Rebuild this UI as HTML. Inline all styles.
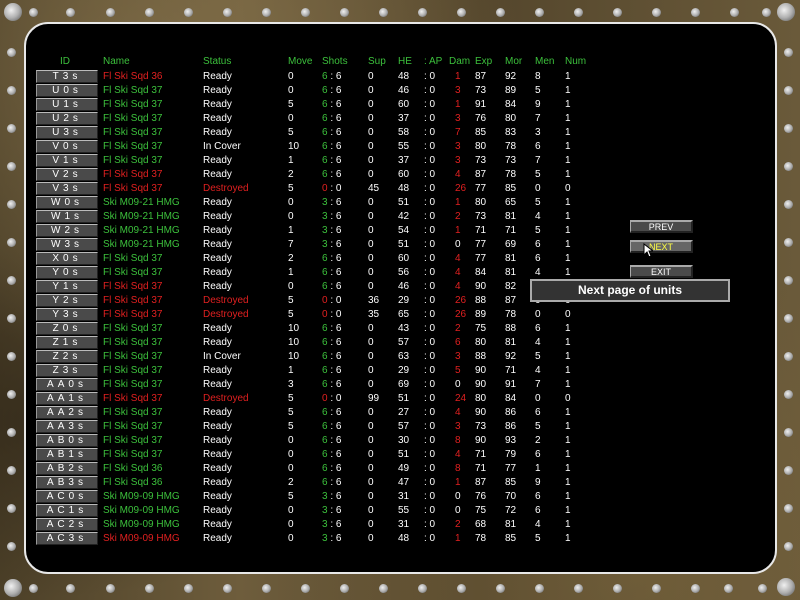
<!DOCTYPE html>
<html><head><meta charset="utf-8"><style>
*{margin:0;padding:0;box-sizing:border-box}
body{width:800px;height:600px;overflow:hidden;position:relative;font-family:"Liberation Sans",sans-serif;font-size:10px;
background:#5e4f33;}
.frame{position:absolute;inset:0;background:
radial-gradient(ellipse at 20% 10%,rgba(140,120,80,.6),transparent 40%),
radial-gradient(ellipse at 80% 95%,rgba(120,100,60,.6),transparent 40%),
radial-gradient(ellipse at 5% 70%,rgba(40,32,20,.6),transparent 30%),
linear-gradient(90deg,#4c4028,#6e5d3c 30%,#54462c 60%,#6a5a3a);}
.panel{position:absolute;left:24px;top:22px;width:753px;height:552px;background:#000;border:2px solid #e8e8e8;border-radius:24px}
.rv{position:absolute;width:9px;height:9px;border-radius:50%;background:radial-gradient(circle at 40% 40%,#f0f0f0,#b0b0b0 50%,#505050 100%)}
.big{width:18px;height:18px}
.r{position:absolute;left:0;height:14px;line-height:14px;color:#fff;white-space:nowrap}
.r>*{position:absolute;top:0;font-style:normal;font-weight:normal}
.r>b{left:36px;width:62px;height:13px;top:0;background:#4a4a4a;border-top:1px solid #bbb;border-left:1px solid #999;border-bottom:1px solid #222;border-right:1px solid #222;text-align:center;line-height:12px;letter-spacing:4px;color:#fff}
.r>:nth-child(2){left:103px}.r>:nth-child(3){left:203px}.r>:nth-child(4){left:288px}
.r>:nth-child(5){left:322px}.r>:nth-child(6){left:368px}.r>:nth-child(7){left:398px}
.r>:nth-child(8){left:424px}.r>:nth-child(9){left:455px}.r>:nth-child(10){left:475px}
.r>:nth-child(11){left:505px}.r>:nth-child(12){left:535px}.r>:nth-child(13){left:565px}
.g{color:#3cc03c}.d{color:#e02020}
.h{color:#3cc03c}.h>:first-child{left:60px}.h>:nth-child(9){left:449px}
.btn{position:absolute;left:630px;width:63px;height:13px;background:#4a4a4a;border-top:2px solid #aaa;border-left:1px solid #aaa;border-right:2px solid #222;border-bottom:2px solid #222;color:#fff;text-align:center;font-size:9px;line-height:10px}
.tip{position:absolute;left:530px;top:279px;width:200px;height:23px;background:#333;border:2px solid #aaa;color:#fff;text-align:center;font-size:12px;font-weight:bold;line-height:19px}
</style></head><body>
<div class="frame"></div>
<div class="rv big" style="left:4px;top:3px"></div><div class="rv big" style="left:777px;top:3px"></div>
<div class="rv big" style="left:4px;top:579px"></div><div class="rv big" style="left:777px;top:578px"></div>
<div class="rv" style="left:29px;top:8px"></div><div class="rv" style="left:66px;top:8px"></div><div class="rv" style="left:106px;top:8px"></div><div class="rv" style="left:145px;top:8px"></div><div class="rv" style="left:184px;top:8px"></div><div class="rv" style="left:223px;top:8px"></div><div class="rv" style="left:262px;top:8px"></div><div class="rv" style="left:301px;top:8px"></div><div class="rv" style="left:340px;top:8px"></div><div class="rv" style="left:379px;top:8px"></div><div class="rv" style="left:418px;top:8px"></div><div class="rv" style="left:457px;top:8px"></div><div class="rv" style="left:496px;top:8px"></div><div class="rv" style="left:535px;top:8px"></div><div class="rv" style="left:574px;top:8px"></div><div class="rv" style="left:613px;top:8px"></div><div class="rv" style="left:652px;top:8px"></div><div class="rv" style="left:691px;top:8px"></div><div class="rv" style="left:730px;top:8px"></div><div class="rv" style="left:762px;top:8px"></div>
<div class="rv" style="left:29px;top:584px"></div><div class="rv" style="left:66px;top:584px"></div><div class="rv" style="left:106px;top:584px"></div><div class="rv" style="left:145px;top:584px"></div><div class="rv" style="left:184px;top:584px"></div><div class="rv" style="left:223px;top:584px"></div><div class="rv" style="left:262px;top:584px"></div><div class="rv" style="left:301px;top:584px"></div><div class="rv" style="left:340px;top:584px"></div><div class="rv" style="left:379px;top:584px"></div><div class="rv" style="left:418px;top:584px"></div><div class="rv" style="left:457px;top:584px"></div><div class="rv" style="left:496px;top:584px"></div><div class="rv" style="left:535px;top:584px"></div><div class="rv" style="left:574px;top:584px"></div><div class="rv" style="left:613px;top:584px"></div><div class="rv" style="left:652px;top:584px"></div><div class="rv" style="left:691px;top:584px"></div><div class="rv" style="left:724px;top:584px"></div><div class="rv" style="left:758px;top:584px"></div>
<div class="rv" style="left:7px;top:48px"></div><div class="rv" style="left:7px;top:86px"></div><div class="rv" style="left:7px;top:124px"></div><div class="rv" style="left:7px;top:162px"></div><div class="rv" style="left:7px;top:200px"></div><div class="rv" style="left:7px;top:238px"></div><div class="rv" style="left:7px;top:276px"></div><div class="rv" style="left:7px;top:314px"></div><div class="rv" style="left:7px;top:352px"></div><div class="rv" style="left:7px;top:390px"></div><div class="rv" style="left:7px;top:428px"></div><div class="rv" style="left:7px;top:466px"></div><div class="rv" style="left:7px;top:504px"></div><div class="rv" style="left:7px;top:542px"></div>
<div class="rv" style="left:784px;top:48px"></div><div class="rv" style="left:784px;top:86px"></div><div class="rv" style="left:784px;top:124px"></div><div class="rv" style="left:784px;top:162px"></div><div class="rv" style="left:784px;top:200px"></div><div class="rv" style="left:784px;top:238px"></div><div class="rv" style="left:784px;top:276px"></div><div class="rv" style="left:784px;top:314px"></div><div class="rv" style="left:784px;top:352px"></div><div class="rv" style="left:784px;top:390px"></div><div class="rv" style="left:784px;top:428px"></div><div class="rv" style="left:784px;top:466px"></div><div class="rv" style="left:784px;top:504px"></div><div class="rv" style="left:784px;top:542px"></div>
<div class="panel"></div>

<div class="r h" style="top:55px"><i>ID</i><i>Name</i><i>Status</i><i>Move</i><i>Shots</i><i>Sup</i><i>HE</i><i>: AP</i><i>Dam</i><i>Exp</i><i>Mor</i><i>Men</i><i>Num</i></div>

<div class="r" style="top:70px"><b>T3s</b><i class="d">Fl Ski Sqd 36</i><i>Ready</i><i>0</i><i><span class="g">6</span> : 6</i><i>0</i><i>48</i><i>: 0</i><i class="d">1</i><i>87</i><i>92</i><i>8</i><i>1</i></div>
<div class="r" style="top:84px"><b>U0s</b><i class="g">Fl Ski Sqd 37</i><i>Ready</i><i>0</i><i><span class="g">6</span> : 6</i><i>0</i><i>46</i><i>: 0</i><i class="d">3</i><i>73</i><i>89</i><i>5</i><i>1</i></div>
<div class="r" style="top:98px"><b>U1s</b><i class="g">Fl Ski Sqd 37</i><i>Ready</i><i>5</i><i><span class="g">6</span> : 6</i><i>0</i><i>60</i><i>: 0</i><i class="d">1</i><i>91</i><i>84</i><i>9</i><i>1</i></div>
<div class="r" style="top:112px"><b>U2s</b><i class="g">Fl Ski Sqd 37</i><i>Ready</i><i>0</i><i><span class="g">6</span> : 6</i><i>0</i><i>37</i><i>: 0</i><i class="d">3</i><i>76</i><i>80</i><i>7</i><i>1</i></div>
<div class="r" style="top:126px"><b>U3s</b><i class="g">Fl Ski Sqd 37</i><i>Ready</i><i>5</i><i><span class="g">6</span> : 6</i><i>0</i><i>58</i><i>: 0</i><i class="d">7</i><i>85</i><i>83</i><i>3</i><i>1</i></div>
<div class="r" style="top:140px"><b>V0s</b><i class="g">Fl Ski Sqd 37</i><i>In Cover</i><i>10</i><i><span class="g">6</span> : 6</i><i>0</i><i>55</i><i>: 0</i><i class="d">3</i><i>80</i><i>78</i><i>6</i><i>1</i></div>
<div class="r" style="top:154px"><b>V1s</b><i class="g">Fl Ski Sqd 37</i><i>Ready</i><i>1</i><i><span class="g">6</span> : 6</i><i>0</i><i>37</i><i>: 0</i><i class="d">3</i><i>73</i><i>73</i><i>7</i><i>1</i></div>
<div class="r" style="top:168px"><b>V2s</b><i class="d">Fl Ski Sqd 37</i><i>Ready</i><i>2</i><i><span class="g">6</span> : 6</i><i>0</i><i>60</i><i>: 0</i><i class="d">4</i><i>87</i><i>78</i><i>5</i><i>1</i></div>
<div class="r" style="top:182px"><b>V3s</b><i class="d">Fl Ski Sqd 37</i><i class="d">Destroyed</i><i>5</i><i><span class="d">0</span> : 0</i><i>45</i><i>48</i><i>: 0</i><i class="d">26</i><i>77</i><i>85</i><i>0</i><i>0</i></div>
<div class="r" style="top:196px"><b>W0s</b><i class="g">Ski M09-21 HMG</i><i>Ready</i><i>0</i><i><span class="g">3</span> : 6</i><i>0</i><i>51</i><i>: 0</i><i class="d">1</i><i>80</i><i>65</i><i>5</i><i>1</i></div>
<div class="r" style="top:210px"><b>W1s</b><i class="g">Ski M09-21 HMG</i><i>Ready</i><i>0</i><i><span class="g">3</span> : 6</i><i>0</i><i>42</i><i>: 0</i><i class="d">2</i><i>73</i><i>81</i><i>4</i><i>1</i></div>
<div class="r" style="top:224px"><b>W2s</b><i class="g">Ski M09-21 HMG</i><i>Ready</i><i>1</i><i><span class="g">3</span> : 6</i><i>0</i><i>54</i><i>: 0</i><i class="d">1</i><i>71</i><i>71</i><i>5</i><i>1</i></div>
<div class="r" style="top:238px"><b>W3s</b><i class="g">Ski M09-21 HMG</i><i>Ready</i><i>7</i><i><span class="g">3</span> : 6</i><i>0</i><i>51</i><i>: 0</i><i>0</i><i>77</i><i>69</i><i>6</i><i>1</i></div>
<div class="r" style="top:252px"><b>X0s</b><i class="g">Fl Ski Sqd 37</i><i>Ready</i><i>2</i><i><span class="g">6</span> : 6</i><i>0</i><i>60</i><i>: 0</i><i class="d">4</i><i>77</i><i>81</i><i>6</i><i>1</i></div>
<div class="r" style="top:266px"><b>Y0s</b><i class="g">Fl Ski Sqd 37</i><i>Ready</i><i>1</i><i><span class="g">6</span> : 6</i><i>0</i><i>56</i><i>: 0</i><i class="d">4</i><i>84</i><i>81</i><i>4</i><i>1</i></div>
<div class="r" style="top:280px"><b>Y1s</b><i class="d">Fl Ski Sqd 37</i><i>Ready</i><i>0</i><i><span class="g">6</span> : 6</i><i>0</i><i>46</i><i>: 0</i><i class="d">4</i><i>90</i><i>82</i><i>6</i><i>1</i></div>
<div class="r" style="top:294px"><b>Y2s</b><i class="d">Fl Ski Sqd 37</i><i class="d">Destroyed</i><i>5</i><i><span class="d">0</span> : 0</i><i>36</i><i>29</i><i>: 0</i><i class="d">26</i><i>88</i><i>87</i><i>0</i><i>0</i></div>
<div class="r" style="top:308px"><b>Y3s</b><i class="d">Fl Ski Sqd 37</i><i class="d">Destroyed</i><i>5</i><i><span class="d">0</span> : 0</i><i>35</i><i>65</i><i>: 0</i><i class="d">26</i><i>89</i><i>78</i><i>0</i><i>0</i></div>
<div class="r" style="top:322px"><b>Z0s</b><i class="g">Fl Ski Sqd 37</i><i>Ready</i><i>10</i><i><span class="g">6</span> : 6</i><i>0</i><i>43</i><i>: 0</i><i class="d">2</i><i>75</i><i>88</i><i>6</i><i>1</i></div>
<div class="r" style="top:336px"><b>Z1s</b><i class="g">Fl Ski Sqd 37</i><i>Ready</i><i>10</i><i><span class="g">6</span> : 6</i><i>0</i><i>57</i><i>: 0</i><i class="d">6</i><i>80</i><i>81</i><i>4</i><i>1</i></div>
<div class="r" style="top:350px"><b>Z2s</b><i class="g">Fl Ski Sqd 37</i><i>In Cover</i><i>10</i><i><span class="g">6</span> : 6</i><i>0</i><i>63</i><i>: 0</i><i class="d">3</i><i>88</i><i>92</i><i>5</i><i>1</i></div>
<div class="r" style="top:364px"><b>Z3s</b><i class="g">Fl Ski Sqd 37</i><i>Ready</i><i>1</i><i><span class="g">6</span> : 6</i><i>0</i><i>29</i><i>: 0</i><i class="d">5</i><i>90</i><i>71</i><i>4</i><i>1</i></div>
<div class="r" style="top:378px"><b>AA0s</b><i class="g">Fl Ski Sqd 37</i><i>Ready</i><i>3</i><i><span class="g">6</span> : 6</i><i>0</i><i>69</i><i>: 0</i><i>0</i><i>90</i><i>91</i><i>7</i><i>1</i></div>
<div class="r" style="top:392px"><b>AA1s</b><i class="d">Fl Ski Sqd 37</i><i class="d">Destroyed</i><i>5</i><i><span class="d">0</span> : 0</i><i>99</i><i>51</i><i>: 0</i><i class="d">24</i><i>80</i><i>84</i><i>0</i><i>0</i></div>
<div class="r" style="top:406px"><b>AA2s</b><i class="g">Fl Ski Sqd 37</i><i>Ready</i><i>5</i><i><span class="g">6</span> : 6</i><i>0</i><i>27</i><i>: 0</i><i class="d">4</i><i>90</i><i>86</i><i>6</i><i>1</i></div>
<div class="r" style="top:420px"><b>AA3s</b><i class="g">Fl Ski Sqd 37</i><i>Ready</i><i>5</i><i><span class="g">6</span> : 6</i><i>0</i><i>57</i><i>: 0</i><i class="d">3</i><i>73</i><i>86</i><i>5</i><i>1</i></div>
<div class="r" style="top:434px"><b>AB0s</b><i class="g">Fl Ski Sqd 37</i><i>Ready</i><i>0</i><i><span class="g">6</span> : 6</i><i>0</i><i>30</i><i>: 0</i><i class="d">8</i><i>90</i><i>93</i><i>2</i><i>1</i></div>
<div class="r" style="top:448px"><b>AB1s</b><i class="g">Fl Ski Sqd 37</i><i>Ready</i><i>0</i><i><span class="g">6</span> : 6</i><i>0</i><i>51</i><i>: 0</i><i class="d">4</i><i>71</i><i>79</i><i>6</i><i>1</i></div>
<div class="r" style="top:462px"><b>AB2s</b><i class="g">Fl Ski Sqd 36</i><i>Ready</i><i>0</i><i><span class="g">6</span> : 6</i><i>0</i><i>49</i><i>: 0</i><i class="d">8</i><i>71</i><i>77</i><i>1</i><i>1</i></div>
<div class="r" style="top:476px"><b>AB3s</b><i class="g">Fl Ski Sqd 36</i><i>Ready</i><i>2</i><i><span class="g">6</span> : 6</i><i>0</i><i>47</i><i>: 0</i><i class="d">1</i><i>87</i><i>85</i><i>9</i><i>1</i></div>
<div class="r" style="top:490px"><b>AC0s</b><i class="g">Ski M09-09 HMG</i><i>Ready</i><i>5</i><i><span class="g">3</span> : 6</i><i>0</i><i>31</i><i>: 0</i><i>0</i><i>76</i><i>70</i><i>6</i><i>1</i></div>
<div class="r" style="top:504px"><b>AC1s</b><i class="g">Ski M09-09 HMG</i><i>Ready</i><i>0</i><i><span class="g">3</span> : 6</i><i>0</i><i>55</i><i>: 0</i><i>0</i><i>75</i><i>72</i><i>6</i><i>1</i></div>
<div class="r" style="top:518px"><b>AC2s</b><i class="g">Ski M09-09 HMG</i><i>Ready</i><i>0</i><i><span class="g">3</span> : 6</i><i>0</i><i>31</i><i>: 0</i><i class="d">2</i><i>68</i><i>81</i><i>4</i><i>1</i></div>
<div class="r" style="top:532px"><b>AC3s</b><i class="d">Ski M09-09 HMG</i><i>Ready</i><i>0</i><i><span class="g">3</span> : 6</i><i>0</i><i>48</i><i>: 0</i><i class="d">1</i><i>78</i><i>85</i><i>5</i><i>1</i></div>

<div class="btn" style="top:220px">PREV</div>
<div class="btn" style="top:240px;color:#ff4;background:#666">NEXT</div>
<div class="btn" style="top:265px">EXIT</div>
<svg style="position:absolute;left:643px;top:243px" width="10" height="16"><path d="M1 1 L1 12 L4 9 L6 14 L8 13 L6 8 L10 8 Z" fill="#fff" stroke="#000" stroke-width="1"/></svg>
<div class="tip">Next page of units</div>
</body></html>
